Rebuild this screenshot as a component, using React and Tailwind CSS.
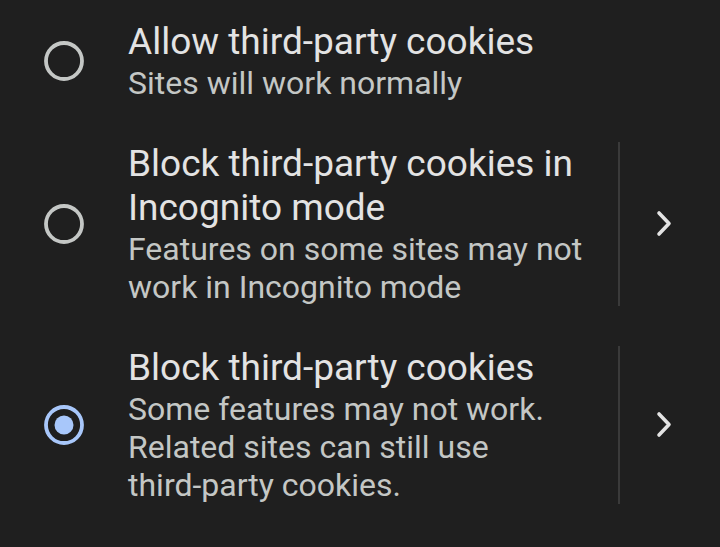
import React from "react";

function Radio({ checked }) {
  return (
    <div className="w-[128px] shrink-0 flex items-center justify-center">
      {checked ? (
        <svg width="42" height="42" viewBox="0 0 42 42">
          <circle cx="21" cy="21" r="18" fill="none" stroke="#a8c7fa" strokeWidth="3.8" />
          <circle cx="21" cy="21" r="9.5" fill="#a8c7fa" />
        </svg>
      ) : (
        <svg width="42" height="42" viewBox="0 0 42 42">
          <circle cx="21" cy="21" r="18" fill="none" stroke="#c4c7c5" strokeWidth="3.8" />
        </svg>
      )}
    </div>
  );
}

function Chevron() {
  return (
    <div className="flex items-stretch shrink-0 w-[102px]">
      <div className="w-[2px] bg-[#3a3a3a]" />
      <div className="w-[88px] flex items-center justify-center">
        <svg width="24" height="30" viewBox="0 0 24 30">
          <path d="M7 4 L17 14.5 L7 25" fill="none" stroke="#e3e3e3" strokeWidth="3.6" strokeLinecap="round" strokeLinejoin="round" />
        </svg>
      </div>
    </div>
  );
}

function Row({ title, summary, checked, chevron }) {
  return (
    <div className="flex items-stretch py-[20px]">
      <Radio checked={checked} />
      <div className="flex-1 flex flex-col pr-[14px]">
        <div className="text-[37px] leading-[44px] text-[#e3e3e3]">{title}</div>
        <div className="text-[32px] leading-[38px] text-[#c4c7c5]">{summary}</div>
      </div>
      {chevron ? <Chevron /> : <div className="w-[102px] shrink-0" />}
    </div>
  );
}

export default function App() {
  return (
    <div className="w-[720px] h-[547px] bg-[#1f1f1f] overflow-hidden" style={{ fontFamily: "Roboto, sans-serif" }}>
      <Row title="Allow third-party cookies" summary="Sites will work normally" />
      <Row
        title="Block third-party cookies in Incognito mode"
        summary="Features on some sites may not work in Incognito mode"
        chevron
      />
      <Row
        title="Block third-party cookies"
        summary={
          <>
            Some features may not work. Related sites can still use{" "}
            <span className="whitespace-nowrap">third-party cookies.</span>
          </>
        }
        checked
        chevron
      />
    </div>
  );
}
